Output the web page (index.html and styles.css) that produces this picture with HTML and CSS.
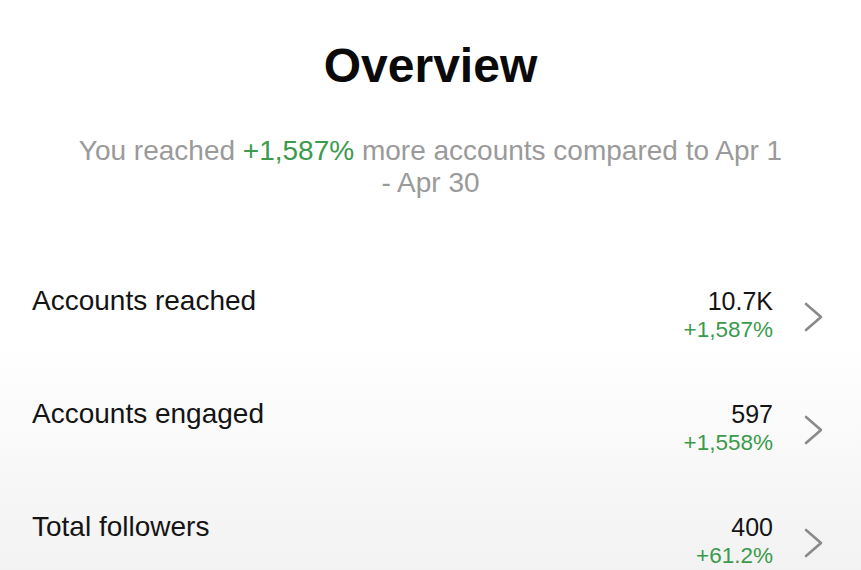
FILE: index.html
```html
<!DOCTYPE html>
<html>
<head>
<meta charset="utf-8">
<link rel="stylesheet" href="styles.css">
</head>
<body>
<div class="page">
  <h1 class="title">Overview</h1>
  <p class="subtitle">You reached <span class="up">+1,587%</span> more accounts compared to Apr 1 - Apr 30</p>
  <div class="rows">
    <div class="row">
      <div class="label">Accounts reached</div>
      <div class="value">
        <div class="num">10.7K</div>
        <div class="delta">+1,587%</div>
      </div>
      <svg class="chev" width="20" height="30" viewBox="0 0 20 30"><polyline points="2,2 17,15 2,28" fill="none" stroke="#8a8a8a" stroke-width="2.6" stroke-linecap="round" stroke-linejoin="round"/></svg>
    </div>
    <div class="row">
      <div class="label">Accounts engaged</div>
      <div class="value">
        <div class="num">597</div>
        <div class="delta">+1,558%</div>
      </div>
      <svg class="chev" width="20" height="30" viewBox="0 0 20 30"><polyline points="2,2 17,15 2,28" fill="none" stroke="#8a8a8a" stroke-width="2.6" stroke-linecap="round" stroke-linejoin="round"/></svg>
    </div>
    <div class="row">
      <div class="label">Total followers</div>
      <div class="value">
        <div class="num">400</div>
        <div class="delta">+61.2%</div>
      </div>
      <svg class="chev" width="20" height="30" viewBox="0 0 20 30"><polyline points="2,2 17,15 2,28" fill="none" stroke="#8a8a8a" stroke-width="2.6" stroke-linecap="round" stroke-linejoin="round"/></svg>
    </div>
  </div>
</div>
</body>
</html>
```
FILE: styles.css
```css
html, body {
  margin: 0;
  padding: 0;
  height: 100%;
}
body {
  background: linear-gradient(to bottom, #ffffff 0%, #ffffff 60%, #f2f2f2 100%);
  font-family: "Liberation Sans", Arial, sans-serif;
  color: #111;
  overflow: hidden;
}
.page {
  padding-top: 37px;
}
.title {
  margin: 0;
  font-size: 48px;
  line-height: 58px;
  font-weight: bold;
  text-align: center;
  color: #0a0a0a;
}
.subtitle {
  margin: 40px auto 0;
  width: 720px;
  font-size: 28px;
  line-height: 32px;
  color: #9a9a9a;
  text-align: center;
}
.up {
  color: #3b9a4c;
}
.rows {
  margin-top: 86px;
}
.row {
  display: flex;
  align-items: flex-start;
  height: 113px;
  padding: 0 37px 0 32px;
}
.row:last-child {
  height: auto;
}
.label {
  flex: 1;
  font-size: 28px;
  line-height: 32px;
  color: #141414;
}
.value {
  text-align: right;
}
.num {
  font-size: 25px;
  line-height: 32px;
  color: #141414;
}
.delta {
  font-size: 22.5px;
  line-height: 26px;
  color: #3b9a4c;
}
.chev {
  margin-left: 31px;
  margin-top: 17px;
  display: block;
}
```
